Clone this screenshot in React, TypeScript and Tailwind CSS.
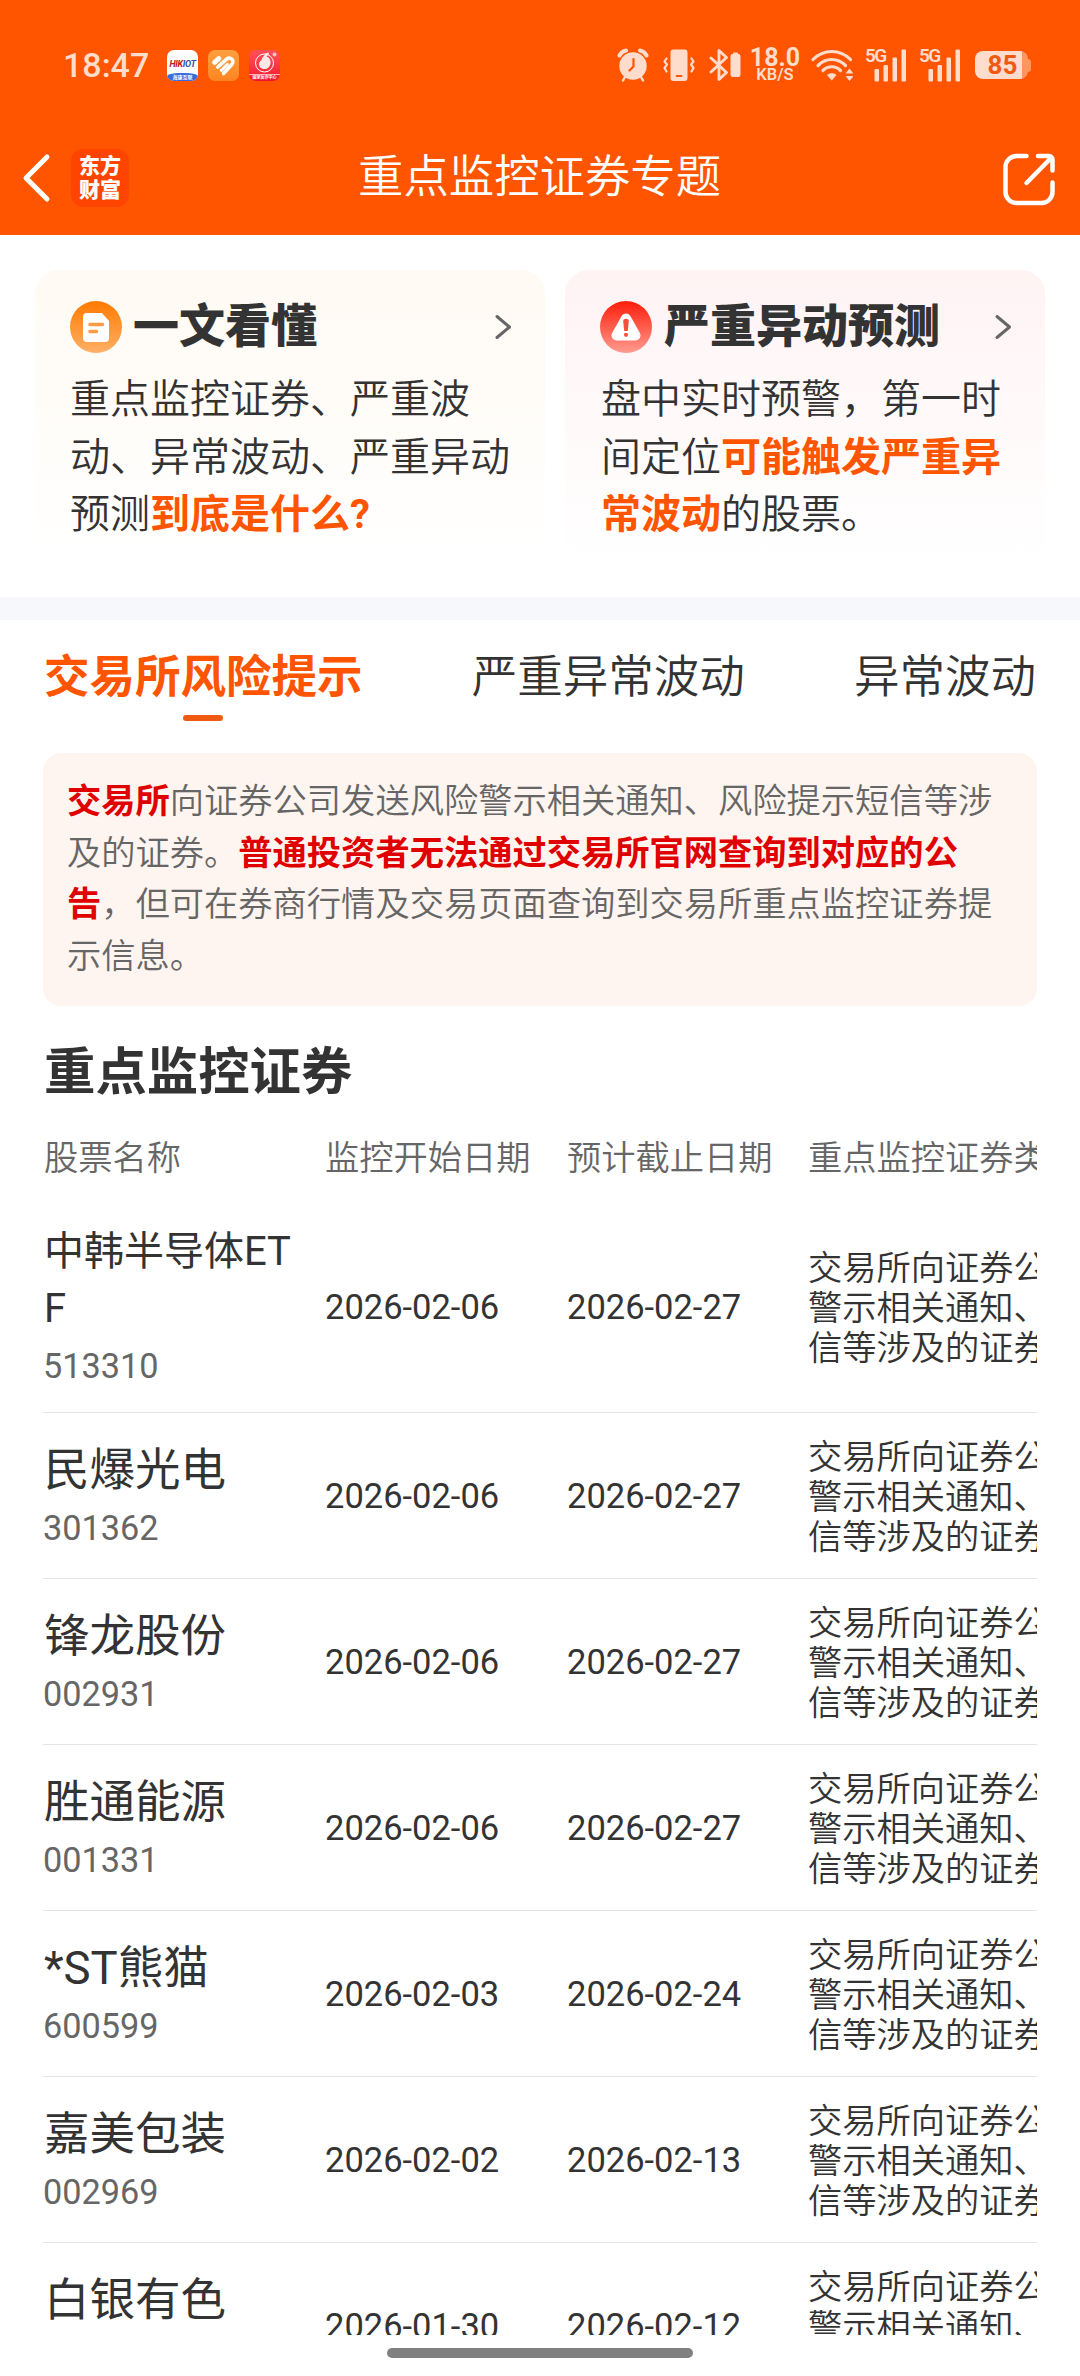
import React, { useState } from 'react';

interface Stock {
    name: string;
    code: string;
    start: string;
    end: string;
}

const TABS = ['交易所风险提示', '严重异常波动', '异常波动'];

const MONITOR_TYPE = '交易所向证券公司发送风险警示相关通知、风险提示短信等涉及的证券';

const STOCKS: Stock[] = [
    { name: '中韩半导体ETF', code: '513310', start: '2026-02-06', end: '2026-02-27' },
    { name: '民爆光电', code: '301362', start: '2026-02-06', end: '2026-02-27' },
    { name: '锋龙股份', code: '002931', start: '2026-02-06', end: '2026-02-27' },
    { name: '胜通能源', code: '001331', start: '2026-02-06', end: '2026-02-27' },
    { name: '*ST熊猫', code: '600599', start: '2026-02-03', end: '2026-02-24' },
    { name: '嘉美包装', code: '002969', start: '2026-02-02', end: '2026-02-13' },
    { name: '白银有色', code: '601212', start: '2026-01-30', end: '2026-02-12' },
];

const AppBadges = () => (
    <div className="flex gap-[10px]">
        <div className="flex h-[31px] w-[31px] flex-col justify-between overflow-hidden rounded-[7px] bg-white">
            <div className="pt-[10px] text-center text-[9px] leading-[9px] font-bold tracking-[-0.3px] whitespace-nowrap italic">
                <span className="text-[#c8171e]">HIK</span>
                <span className="text-[#2b55a8]">IOT</span>
            </div>
            <div className="h-[8px] rounded-t-[40%] bg-[#3a6bdc] text-center text-[5px] leading-[8px] font-bold text-white">
                海康互联
            </div>
        </div>
        <div className="h-[31px] w-[31px] rounded-[7px] bg-linear-to-b from-[#ffa040] to-[#ff8420]">
            <svg width="31" height="31" viewBox="0 0 31 31" fill="none" stroke="#fff" strokeWidth="3.600" strokeLinecap="round" strokeLinejoin="round">
                <path d="M6.600 12.300 10.800 8.600" strokeWidth="5" />
                <path d="M9.800 17 18.300 9.300C20.500 7 25.500 8.200 24.800 12.500 24.600 13.500 24 14.200 23.300 15L15.500 23.500" />
                <path d="M13.300 20.300 19.500 14.300" strokeWidth="3" />
            </svg>
        </div>
        <div className="flex h-[31px] w-[31px] flex-col items-center justify-between overflow-hidden rounded-[7px] bg-linear-to-b from-[#ff5058] to-[#f5102e]">
            <svg width="27" height="23" viewBox="0 0 27 23">
                <circle cx="13.500" cy="13" r="9" fill="none" stroke="#fff" strokeWidth="1" />
                <path d="M13 6c1-3 3-3.500 5-3-.5 1.500-1 2.500-2.500 3.500 3 1 4.500 4 4 7-.5 3.500-3 5.500-6 5.500s-5.500-2-5.500-5c0-2 1.500-3 2.500-4 .8-1 .5-3 2.500-4z" fill="#ffe9e6" />
                <circle cx="23.500" cy="4.500" r="2" fill="#ffc3bd" />
            </svg>
            <div className="w-full border-t border-[#ffb0b0] text-center text-[4px] leading-[6px] font-bold whitespace-nowrap text-white">
                国家反诈中心
            </div>
        </div>
    </div>
);

const AlarmIcon = () => (
    <svg width="32" height="34" viewBox="0 0 32 34">
        <g stroke="#ffdccb" strokeLinecap="round" fill="none">
            <path d="M2.500 7.500C4 4.500 6 3 9 2.500" strokeWidth="4" />
            <path d="M29.500 7.500C28 4.500 26 3 23 2.500" strokeWidth="4" />
            <path d="M8 29 6 32.500M24 29l2 3.500" strokeWidth="2.500" />
        </g>
        <circle cx="16" cy="18" r="13.700" fill="#ffdccb" />
        <path d="M16.500 11v7.500l-4 4" stroke="#ff5500" strokeWidth="2.200" fill="none" strokeLinecap="round" strokeLinejoin="round" />
    </svg>
);

const VibrateIcon = () => (
    <svg width="32" height="34" viewBox="0 0 32 34" fill="none" stroke="#ffdccb" strokeWidth="2.200" strokeLinecap="round" strokeLinejoin="round">
        <rect x="7.500" y="1.500" width="17" height="31.500" rx="3" fill="#ffdccb" stroke="none" />
        <path d="M13.500 28h5" stroke="#ff5500" strokeWidth="1.800" />
        <path d="m3.500 10.500-2 3 2.500 3-2.500 3.500 2 3.500" />
        <path d="m28.500 10.500 2 3-2.500 3 2.500 3.500-2 3.500" />
    </svg>
);

const BluetoothIcon = () => (
    <svg width="32" height="34" viewBox="0 0 32 34">
        <path d="m2 10 15.500 14.500-7.500 7V2.500l7.500 7L2 24" fill="none" stroke="#ffdccb" strokeWidth="2.900" strokeLinecap="round" strokeLinejoin="round" />
        <rect x="21.500" y="6" width="10" height="23" rx="2.200" fill="#ffdccb" />
        <rect x="24" y="4.500" width="5" height="3" rx="1" fill="#ffdccb" />
    </svg>
);

const WifiIcon = () => (
    <svg width="44" height="34" viewBox="0 0 44 34" fill="none" stroke="#ffdccb" strokeWidth="3.200" strokeLinecap="round">
        <path d="M4 11.500C14.500 .8 31 .8 41.500 11.500" />
        <path d="M9 17.500C17 9.500 28.500 9.500 36.500 17.500" />
        <path d="M14 22.500C19 17.500 26.500 17.500 31.500 22.500" />
        <path d="M18 27c2.500-2.500 7-2.500 9.500 0L22.700 32.500z" fill="#ffdccb" stroke="none" />
        <path d="m36.500 25.500 4-5 4 5zM36.500 28l4 5 4-5z" fill="#ffdccb" stroke="none" />
    </svg>
);

const SignalIcon = () => (
    <div className="relative h-[34px] w-[42px]">
        <span className="absolute top-0 left-0 text-[19px] leading-[16px] font-semibold tracking-[-1.5px]">5G</span>
        <svg width="42" height="34" viewBox="0 0 42 34" fill="#ffdccb">
            <rect x="9.500" y="21" width="4.500" height="12.500" rx="1" />
            <rect x="18.500" y="17" width="4.500" height="16.500" rx="1" />
            <rect x="27.500" y="9.500" width="4.500" height="24" rx="1" />
            <rect x="36.500" y="1.500" width="4.500" height="32" rx="1" />
        </svg>
    </div>
);

const StatusBar = () => (
    <div className="flex h-[121px] items-center pt-[9px] text-[#ffdccb]">
        <span className="w-[104px] text-[34px] leading-none font-medium">18:47</span>
        <AppBadges />
        <div className="mr-[25px] ml-auto flex items-center">
            <AlarmIcon />
            <div className="w-[14px]" />
            <VibrateIcon />
            <div className="w-[14px]" />
            <BluetoothIcon />
            <div className="flex w-[68px] flex-col items-center">
                <span className="text-[25px] leading-[20px] font-bold">18.0</span>
                <span className="text-[16.5px] leading-[14px] font-semibold">KB/S</span>
            </div>
            <WifiIcon />
            <div className="ml-[12px] flex gap-[12px]">
                <SignalIcon />
                <SignalIcon />
            </div>
            <div className="ml-[14px] flex items-center">
                <div className="flex h-[28px] w-[53px] items-center justify-center rounded-[8px] bg-linear-to-r from-[#ffdccb] from-88% to-[#ff965f] to-88% pl-[2px] text-[26px] font-bold text-[#f0590f]">
                    85
                </div>
                <div className="h-[13px] w-[3px] rounded-r-full bg-[#ff965f]" />
            </div>
        </div>
    </div>
);

const NavBar = () => (
    <div className="flex h-[114px] items-center">
        <div className="-ml-[42px] flex w-[337px] items-center">
            <svg width="30" height="52" viewBox="0 0 30 52" fill="none" stroke="#fff" strokeWidth="5" strokeLinecap="round" strokeLinejoin="round">
                <path d="M26 5 5 26l21 21" />
            </svg>
            <div className="ml-[20px] h-[58px] w-[58px] rounded-[12px] bg-[#ff4400] pt-[5px] text-center text-[21px] leading-[24px] font-black text-white">
                东方
                <br />
                财富
            </div>
        </div>
        <h1 className="text-[45.4px] leading-[60px] font-[350] text-white">重点监控证券专题</h1>
        <svg width="53" height="53" viewBox="0 0 53 53" className="mt-[3px] ml-auto" fill="none" stroke="#fff" strokeWidth="4.500" strokeLinecap="round" strokeLinejoin="round">
            <path d="M23.500 3H13.500a11 11 0 0 0-11 11v25a11 11 0 0 0 11 11h25a11 11 0 0 0 11-11V29.500" />
            <path d="M35 3H46a3.500 3.500 0 0 1 3.500 3.500v11M48 5 23.500 30" />
        </svg>
    </div>
);

const ArrowRight = () => (
    <svg width="20" height="28" viewBox="0 0 20 28" fill="none" stroke="#666" strokeWidth="3" strokeLinecap="round" strokeLinejoin="round">
        <path d="M4 3.500 16.500 14 4 24.500" />
    </svg>
);

const DocIcon = () => (
    <svg width="52" height="52" viewBox="0 0 52 52">
        <defs>
            <linearGradient id="doc" x1="0" y1="0" x2="0" y2="1">
                <stop offset="0" stopColor="#ff7a00" />
                <stop offset="1" stopColor="#ffb067" />
            </linearGradient>
        </defs>
        <circle cx="26" cy="26" r="26" fill="url(#doc)" />
        <path d="M17 12h15l7 8v17a4 4 0 0 1-4 4H17a4 4 0 0 1-4-4V16a4 4 0 0 1 4-4z" fill="#fff" />
        <path d="M20 23.500h12.500M20 30.500h6.500" stroke="#ff9a45" strokeWidth="3.500" strokeLinecap="round" />
    </svg>
);

const WarnIcon = () => (
    <svg width="52" height="52" viewBox="0 0 52 52">
        <defs>
            <linearGradient id="warn" x1="0" y1="0" x2="0" y2="1">
                <stop offset="0" stopColor="#ff1c0a" />
                <stop offset="1" stopColor="#ff9c8f" />
            </linearGradient>
        </defs>
        <circle cx="26" cy="26" r="26" fill="url(#warn)" />
        <path d="M26 17.500 16.500 34.500h19z" fill="#fff" stroke="#fff" strokeWidth="10" strokeLinejoin="round" />
        <path d="M23.200 20.500a2.800 2.800 0 0 1 5.600 0l-1 9.500h-3.600z" fill="#f8503f" />
        <circle cx="26" cy="33.800" r="2.100" fill="#f8503f" />
    </svg>
);

const App: React.FC = () => {
    const [active, setActive] = useState(0);

    return (
        <div className="flex h-[2376px] w-[1080px] flex-col overflow-hidden bg-white font-[Roboto,'Noto_Sans_CJK_SC',sans-serif] text-[#333]">
            <header className="h-[235px] bg-[#ff5500] pr-[24px] pl-[63px]">
                <StatusBar />
                <NavBar />
            </header>

            <section className="flex h-[362px] gap-[20px] px-[35px] pt-[35px]">
                <div className="h-[292px] w-[510px] rounded-[24px] bg-linear-to-b from-[#fffaf3] to-white pt-[31px] pr-[32px] pl-[35px]">
                    <div className="flex h-[52px] items-center">
                        <DocIcon />
                        <h2 className="-mt-[3px] mr-auto ml-[11px] text-[46px] leading-[52px] font-black">一文看懂</h2>
                        <ArrowRight />
                    </div>
                    <p className="mt-[18px] text-[40px] leading-[57.6px] font-[350]">
                        重点监控证券、严重波动、异常波动、严重异动预测
                        <span className="font-bold text-[#ff5500]">到底是什么?</span>
                    </p>
                </div>
                <div className="h-[292px] w-[480px] rounded-[24px] bg-linear-to-b from-[#fff3f4] to-white pt-[31px] pr-[32px] pl-[35px]">
                    <div className="flex h-[52px] items-center">
                        <WarnIcon />
                        <h2 className="-mt-[3px] mr-auto ml-[12px] text-[46px] leading-[52px] font-black">严重异动预测</h2>
                        <ArrowRight />
                    </div>
                    <p className="mt-[18px] pl-px text-[40px] leading-[57.6px] font-[350]">
                        盘中实时预警，第一时间定位
                        <span className="font-bold text-[#ff5500]">可能触发严重异常波动</span>
                        的股票。
                    </p>
                </div>
            </section>

            <div className="h-[23px] bg-[#f7f8fb]" />

            <nav className="flex h-[133px] justify-between px-[44px] pt-[26px]">
                {TABS.map((tab, i) => (
                    <button
                        key={tab}
                        onClick={() => setActive(i)}
                        className={
                            i === active
                                ? 'flex flex-col items-center text-[45.5px] leading-[64px] font-bold text-[#ff5500]'
                                : 'flex flex-col items-center text-[45.5px] leading-[64px] font-[350]'
                        }
                    >
                        {tab}
                        {i === active && <span className="mt-[5px] h-[6px] w-[40px] rounded-full bg-[#f05a10]" />}
                    </button>
                ))}
            </nav>

            <main className="ml-[43px] flex h-[1582px] w-[994px] flex-col overflow-hidden">
                <p className="h-[253px] shrink-0 rounded-[18px] bg-[#fff5f0] pt-[23px] pr-[40px] pl-[24px] text-[34.28px] leading-[51.5px] font-[350] text-[#666]">
                    <span className="font-bold text-[#e00000]">交易所</span>
                    向证券公司发送风险警示相关通知、风险提示短信等涉及的证券。
                    <span className="font-bold text-[#e00000]">普通投资者无法通过交易所官网查询到对应的公告</span>
                    ，但可在券商行情及交易页面查询到交易所重点监控证券提示信息。
                </p>

                <h2 className="mt-[31px] pl-[1px] text-[51.4px] leading-[72px] font-bold">重点监控证券</h2>

                <div className="flex h-[93px] w-[1200px] shrink-0 items-center pt-[6px] text-[34.28px] font-[350] whitespace-nowrap text-[#666]">
                    <span className="w-[282px] pl-[1px]">股票名称</span>
                    <span className="w-[242px]">监控开始日期</span>
                    <span className="w-[241px]">预计截止日期</span>
                    <span>重点监控证券类型</span>
                </div>

                {STOCKS.map((stock) => {
                    const long = stock.name.length > 6;
                    return (
                        <div
                            key={stock.code}
                            className={
                                long
                                    ? 'flex h-[211px] w-[1200px] shrink-0 items-center border-b border-[#e4e4e4] pt-[2px]'
                                    : 'flex h-[166px] w-[1200px] shrink-0 items-center border-b border-[#e4e4e4] pt-[2px]'
                            }
                        >
                            <div className="w-[282px] pr-[30px]">
                                <div
                                    className={
                                        long
                                            ? 'pl-[1px] text-[40px] leading-[57px] break-all'
                                            : 'pl-[1px] text-[45.5px] leading-[64px]'
                                    }
                                >
                                    {stock.name}
                                </div>
                                <div className={long ? 'pt-[1px] text-[34.28px] leading-[56px] text-[#666]' : 'text-[34.28px] leading-[51px] text-[#666]'}>
                                    {stock.code}
                                </div>
                            </div>
                            <span className="w-[242px] text-[34.5px]">{stock.start}</span>
                            <span className="w-[241px] text-[34.5px]">{stock.end}</span>
                            <span className="w-[415px] text-[34.28px] leading-[40px] font-[350]">{MONITOR_TYPE}</span>
                        </div>
                    );
                })}
            </main>

            <div className="mx-auto mt-[13px] h-[10px] w-[306px] rounded-full bg-[#808080]" />
        </div>
    );
};

export default App;
